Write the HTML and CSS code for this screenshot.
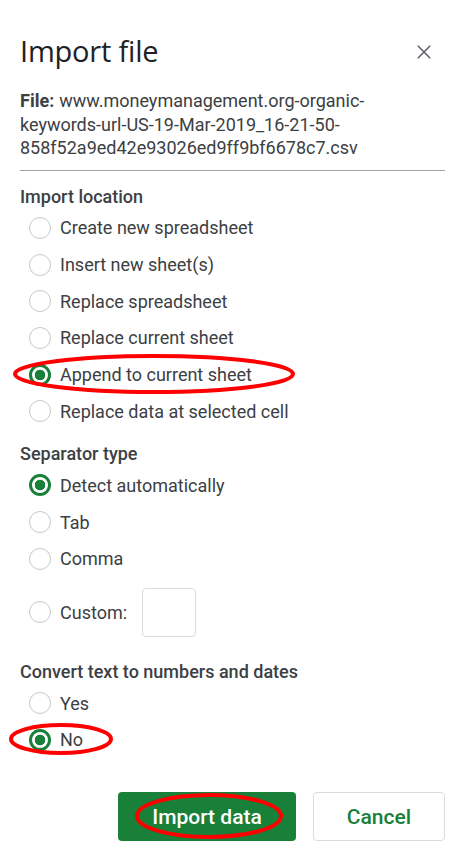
FILE: index.html
```html
<!DOCTYPE html>
<html>
<head>
<meta charset="utf-8">
<link rel="stylesheet" href="styles.css">
</head>
<body>
<div class="dialog">
  <div class="header">
    <h1 class="title">Import file</h1>
    <button class="close" aria-label="Close">
      <svg width="14" height="14" viewBox="0 0 14 14"><path d="M0.8 0.8 L13.2 13.2 M13.2 0.8 L0.8 13.2" stroke="#5f6368" stroke-width="1.6" fill="none"/></svg>
    </button>
  </div>
  <p class="file"><strong class="file-key">File:</strong>www.moneymanagement.org-organic-keywords-url-US-19-Mar-2019_16-21-50-858f52a9ed42e93026ed9ff9bf6678c7.csv</p>
  <div class="divider"></div>

  <div class="section">
    <div class="label">Import location</div>
    <div class="opt"><span class="radio"></span>Create new spreadsheet</div>
    <div class="opt"><span class="radio"></span>Insert new sheet(s)</div>
    <div class="opt"><span class="radio"></span>Replace spreadsheet</div>
    <div class="opt"><span class="radio"></span>Replace current sheet</div>
    <div class="opt mark-wrap"><span class="radio on"></span>Append to current sheet
      <svg class="mark mark1" width="284" height="42" viewBox="0 0 284 42"><ellipse cx="142" cy="21" rx="139" ry="18" fill="none" stroke="#f00" stroke-width="4"/></svg>
    </div>
    <div class="opt"><span class="radio"></span>Replace data at selected cell</div>
  </div>

  <div class="section">
    <div class="label">Separator type</div>
    <div class="opt"><span class="radio on"></span>Detect automatically</div>
    <div class="opt"><span class="radio"></span>Tab</div>
    <div class="opt"><span class="radio"></span>Comma</div>
    <div class="opt custom"><span class="radio"></span>Custom:<span class="box"></span></div>
  </div>

  <div class="section">
    <div class="label">Convert text to numbers and dates</div>
    <div class="opt"><span class="radio"></span>Yes</div>
    <div class="opt mark-wrap"><span class="radio on"></span>No
      <svg class="mark mark2" width="106" height="34" viewBox="0 0 106 34"><ellipse cx="53" cy="17" rx="50" ry="14" fill="none" stroke="#f00" stroke-width="4"/></svg>
    </div>
  </div>

  <div class="buttons">
    <button class="btn primary mark-wrap">Import data
      <svg class="mark mark3" width="152" height="50" viewBox="0 0 152 50"><ellipse cx="76" cy="25" rx="72" ry="21" fill="none" stroke="#f00" stroke-width="4"/></svg>
    </button>
    <button class="btn secondary">Cancel</button>
  </div>
</div>
</body>
</html>
```
FILE: styles.css
```css
html, body {
  margin: 0;
  padding: 0;
  background: #fff;
}
body {
  font-family: Roboto, "Liberation Sans", sans-serif;
  color: #3c4043;
  width: 471px;
}
.dialog {
  padding: 0 26px 0 20px;
}
.header {
  display: flex;
  align-items: center;
  justify-content: space-between;
  height: 50px;
  padding-top: 25px;
}
.title {
  margin: 0;
  font-family: "Open Sans", Roboto, sans-serif;
  font-weight: 400;
  font-size: 29px;
  color: #202124;
  letter-spacing: -0.2px;
}
.close {
  border: 0;
  background: none;
  padding: 0;
  width: 14px;
  height: 14px;
  margin-right: 14px;
  margin-top: 4px;
  display: flex;
}
.file {
  margin: 14px 0 0 0;
  font-size: 18px;
  line-height: 23.5px;
  color: #3c4043;
  width: 380px;
}
.file-key {
  font-weight: 700;
  display: inline-block;
  margin-right: 5px;
}
.divider {
  height: 1px;
  background: #9aa0a6;
  margin-top: 10px;
  margin-bottom: 14px;
}
.section {
  margin-bottom: 12.5px;
}
.label {
  font-size: 18px;
  font-weight: 500;
  line-height: 24px;
  color: #3c4043;
  margin-bottom: 1px;
}
.opt {
  display: flex;
  align-items: center;
  height: 36.7px;
  font-size: 18px;
  color: #3c4043;
  padding-left: 9px;
  position: relative;
}
.radio {
  width: 22px;
  height: 22px;
  border: 1px solid #c8c8c8;
  border-radius: 50%;
  box-sizing: border-box;
  margin-right: 9px;
  flex: none;
  background: #fff;
}
.radio.on {
  border: 3px solid #188038;
  background: radial-gradient(circle, #188038 0 5px, #fff 5.6px);
}
.custom {
  height: 70px;
}
.box {
  display: inline-block;
  width: 54px;
  height: 49px;
  border: 1px solid #dadce0;
  border-radius: 4px;
  margin-left: 15px;
  box-sizing: border-box;
}
.mark-wrap {
  position: relative;
}
.mark {
  position: absolute;
  pointer-events: none;
}
.mark1 {
  left: -8px;
  top: -3px;
}
.mark2 {
  left: -12px;
  top: 1px;
}
.mark3 {
  left: 15px;
  top: -1px;
}
.buttons {
  display: flex;
  justify-content: flex-end;
  gap: 17px;
  margin-top: 34px;
}
.btn {
  height: 49px;
  border-radius: 4px;
  font-family: Roboto, sans-serif;
  font-size: 21px;
  font-weight: 500;
  box-sizing: border-box;
}
.primary {
  width: 178px;
  background: #188038;
  color: #fff;
  border: 0;
}
.secondary {
  width: 132px;
  background: #fff;
  color: #188038;
  border: 1px solid #dadce0;
}
```
